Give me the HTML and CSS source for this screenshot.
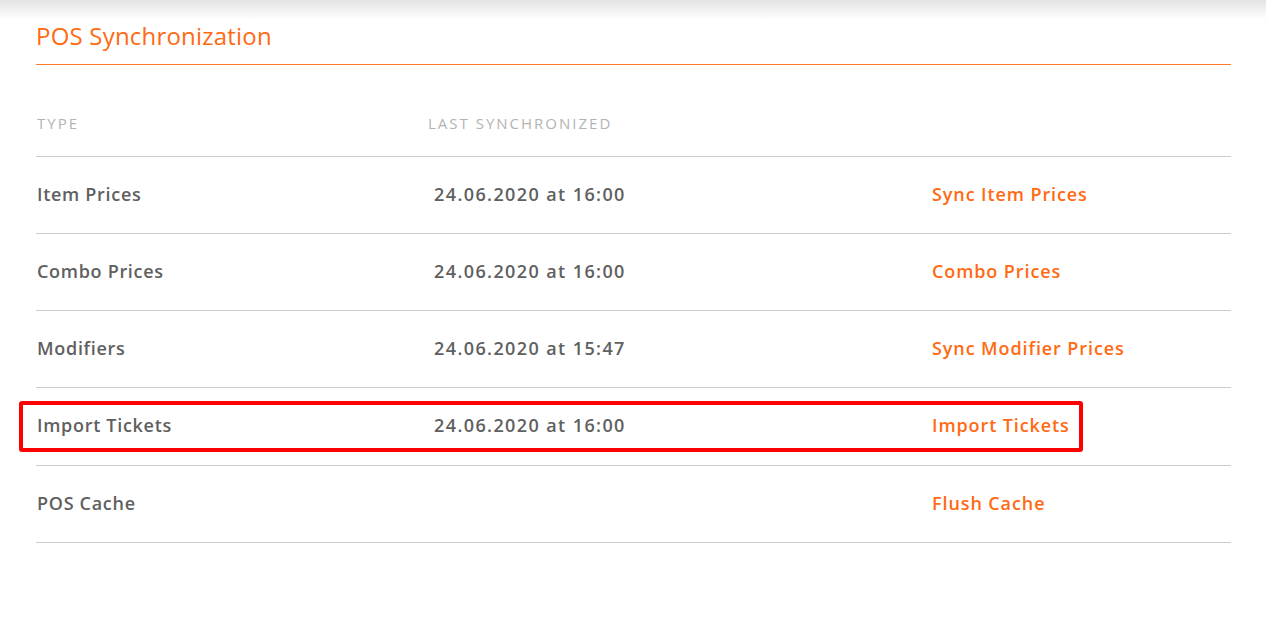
FILE: index.html
```html
<!DOCTYPE html>
<html lang="en">
<head>
  <meta charset="UTF-8" />
  <title>POS Synchronization</title>
  <link rel="stylesheet" href="styles.css">
</head>
<body>
  <div class="top-shadow"></div>

  <div class="container">
    <h1 class="section-title">POS Synchronization</h1>

    <table class="sync-table">
      <thead>
        <tr>
          <th class="col-type">Type</th>
          <th class="col-date">Last synchronized</th>
          <th class="col-action"></th>
        </tr>
      </thead>
      <tbody>
        <tr>
          <td class="col-type">Item Prices</td>
          <td class="col-date">24.06.2020 at 16:00</td>
          <td class="col-action"><a href="#">Sync Item Prices</a></td>
        </tr>
        <tr>
          <td class="col-type">Combo Prices</td>
          <td class="col-date">24.06.2020 at 16:00</td>
          <td class="col-action"><a href="#">Combo Prices</a></td>
        </tr>
        <tr>
          <td class="col-type">Modifiers</td>
          <td class="col-date">24.06.2020 at 15:47</td>
          <td class="col-action"><a href="#">Sync Modifier Prices</a></td>
        </tr>
        <tr class="highlighted">
          <td class="col-type">Import Tickets</td>
          <td class="col-date">24.06.2020 at 16:00</td>
          <td class="col-action"><a href="#">Import Tickets</a><span class="highlight-box"></span></td>
        </tr>
        <tr>
          <td class="col-type">POS Cache</td>
          <td class="col-date"></td>
          <td class="col-action"><a href="#">Flush Cache</a></td>
        </tr>
      </tbody>
    </table>
  </div>
</body>
</html>
```

FILE: styles.css
```css
* {
  box-sizing: border-box;
  margin: 0;
  padding: 0;
}

body {
  font-family: "Open Sans", Arial, sans-serif;
  background-color: #ffffff;
  color: #555555;
}

.top-shadow {
  height: 20px;
  background: linear-gradient(#e4e4e4, #ffffff);
}

.container {
  padding: 0 35px 0 36px;
}

.section-title {
  font-size: 24px;
  font-weight: 400;
  letter-spacing: 0.2px;
  color: #ff6a13;
  line-height: 32px;
  padding-bottom: 12px;
  border-bottom: 1px solid #ff7a2a;
}

/* Sync table */
.sync-table {
  width: 100%;
  border-collapse: collapse;
  margin-top: 40px;
}

.sync-table th {
  text-align: left;
  font-size: 15px;
  font-weight: 400;
  letter-spacing: 2px;
  text-transform: uppercase;
  color: #b3b3b3;
  height: 51px;
  vertical-align: top;
  padding-top: 8px;
  border-bottom: 1px solid #cccccc;
}

.sync-table td {
  height: 77.25px;
  font-size: 18px;
  font-weight: 600;
  letter-spacing: 0.7px;
  color: #606060;
  border-bottom: 1px solid #cccccc;
  vertical-align: middle;
  padding-bottom: 2px;
}

.sync-table .col-type {
  width: 392px;
  padding-left: 1px;
}

.sync-table .col-date {
  width: 503px;
}

.sync-table td.col-date {
  padding-left: 6px;
  letter-spacing: 1.4px;
}

.sync-table td.col-action {
  padding-left: 1px;
  letter-spacing: 0.9px;
}

.sync-table .col-action a {
  color: #ff6a13;
  text-decoration: none;
}

.highlighted td {
  position: relative;
}

.highlight-box {
  position: absolute;
  left: -912px;
  right: 148px;
  top: 13px;
  height: 51px;
  border: 4px solid #ff0000;
  border-radius: 3px;
  pointer-events: none;
}
```
